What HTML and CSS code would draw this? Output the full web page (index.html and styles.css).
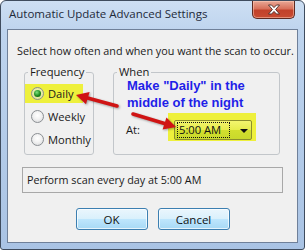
FILE: index.html
```html
<!DOCTYPE html>
<html>
<head>
<meta charset="utf-8">
<link rel="stylesheet" href="styles.css">
</head>
<body>
<div class="window">
  <div class="titlebar">
    <span class="title">Automatic Update Advanced Settings</span>
    <span class="close">
      <svg width="14" height="11" viewBox="0 0 14 11"><path d="M1.5 1 L4.5 1 L7 3.6 L9.5 1 L12.5 1 L8.6 5.5 L12.5 10 L9.5 10 L7 7.4 L4.5 10 L1.5 10 L5.4 5.5 Z" fill="#fff" stroke="#4a2a26" stroke-width="0.9" stroke-linejoin="round"/></svg>
    </span>
  </div>
  <div class="client">
    <div class="intro">Select how often and when you want the scan to occur.</div>
    <div class="groups">
      <fieldset class="group freq">
        <legend>Frequency</legend>
        <div class="radios">
          <div class="radio-row hl"><span class="radio checked"></span><span>Daily</span></div>
          <div class="radio-row"><span class="radio"></span><span>Weekly</span></div>
          <div class="radio-row"><span class="radio"></span><span>Monthly</span></div>
        </div>
      </fieldset>
      <fieldset class="group when">
        <legend>When</legend>
        <div class="note">Make "Daily" in the<br>middle of the night</div>
        <div class="at-row">
          <span class="at">At:</span>
          <div class="combo-hl">
            <div class="combo">
              <span class="combo-text">5:00 AM</span>
              <span class="combo-arrow"></span>
            </div>
          </div>
        </div>
      </fieldset>
    </div>
    <div class="status">Perform scan every day at 5:00 AM</div>
    <div class="buttons">
      <button class="btn">OK</button>
      <button class="btn">Cancel</button>
    </div>
  </div>
  <svg class="arrows" width="305" height="250" viewBox="0 0 305 250">
    <line x1="117" y1="106" x2="87.6" y2="98.1" stroke="#d01414" stroke-width="3.6" stroke-linecap="round"/>
    <polygon points="76,95 89.6,92 86,104.2" fill="#d01414"/>
    <line x1="133" y1="114" x2="164.5" y2="123.5" stroke="#d01414" stroke-width="3.6" stroke-linecap="round"/>
    <polygon points="176,127 162.6,129.6 166.4,117.4" fill="#d01414"/>
  </svg>
</div>
</body>
</html>
```
FILE: styles.css
```css
html, body {
  margin: 0;
  padding: 0;
  background: #ffffff;
}

.window {
  position: relative;
  width: 305px;
  height: 250px;
  box-sizing: border-box;
  border: 1px solid #3f4c5e;
  border-radius: 6px 6px 3px 3px;
  background: linear-gradient(#cddff3 0px, #bed4ee 30px, #a9c3e4 250px);
  display: flex;
  flex-direction: column;
  font-family: "Open Sans", "Noto Sans", sans-serif;
  font-size: 10.8px;
  color: #1a1a1a;
  overflow: hidden;
  white-space: nowrap;
}

.titlebar {
  height: 28px;
  display: flex;
  align-items: flex-start;
  flex: none;
}

.title {
  padding-left: 8px;
  margin-top: 5px;
  line-height: 16px;
  font-size: 11.5px;
  color: #1e2a3a;
}

.close {
  margin-left: auto;
  margin-right: 9px;
  width: 43px;
  height: 18px;
  box-sizing: border-box;
  border: 1px solid #5e2a22;
  border-top: none;
  border-radius: 0 0 5px 5px;
  background: linear-gradient(#e9a896 0%, #d8715b 45%, #c2412a 55%, #c84b32 100%);
  box-shadow: inset 0 0 0 1px rgba(255, 210, 190, 0.5);
  display: flex;
  align-items: center;
  justify-content: center;
}

.client {
  flex: 1;
  margin: 0 6px 6px 6px;
  border: 1px solid #6f8099;
  background: #f0f0f0;
  display: flex;
  flex-direction: column;
}

.intro {
  padding: 13px 0 0 9px;
  line-height: 16px;
  margin-bottom: 5px;
}

.groups {
  display: flex;
  align-items: stretch;
  margin-left: 16px;
}

.group {
  margin: 0;
  padding: 0;
  border: 1px solid #c2c6ca;
  border-radius: 3px;
  box-sizing: border-box;
  min-width: 0;
}

.group legend {
  margin-left: 3px;
  padding: 0 2px;
  line-height: 16px;
  font-size: 11.2px;
}

.freq {
  width: 70px;
  padding-bottom: 5px;
}

.when {
  width: 167px;
  margin-left: 19px;
}

.radios {
  margin-top: 4px;
  font-size: 11.2px;
}

.radio-row {
  height: 19px;
  margin-bottom: 4px;
  width: 58px;
  display: flex;
  align-items: center;
  padding-left: 6px;
  box-sizing: border-box;
}

.radio-row:last-child {
  margin-bottom: 0;
}

.hl {
  background: #eef03c;
}

.radio {
  width: 13px;
  height: 13px;
  box-sizing: border-box;
  border: 1px solid #8b8f93;
  border-radius: 50%;
  background: radial-gradient(circle at 50% 40%, #ffffff 0%, #f2f2f2 45%, #d2d4d6 100%);
  margin-right: 4px;
  flex: none;
  display: flex;
  align-items: center;
  justify-content: center;
}

.radio.checked {
  background: radial-gradient(circle at 50% 40%, #f3f6c0 0%, #d9df8a 100%);
}

.radio.checked::after {
  content: "";
  width: 7px;
  height: 7px;
  border-radius: 50%;
  background: radial-gradient(circle at 40% 35%, #7fe07f 0%, #1c8a1c 55%, #0d4f0d 100%);
}

.note {
  margin-top: -3px;
  padding-left: 13px;
  font-family: "Liberation Sans", Arial, sans-serif;
  font-weight: bold;
  font-size: 13px;
  line-height: 17px;
  color: #1f1fe8;
}

.at-row {
  display: flex;
  align-items: flex-end;
  margin-top: 2px;
  padding-left: 12px;
  font-size: 11.2px;
}

.at {
  width: 42px;
  line-height: 16px;
  margin-bottom: 3px;
}

.combo-hl {
  background: #eef03c;
  padding: 7px 4px 1px 6px;
}

.combo {
  width: 78px;
  height: 20px;
  box-sizing: border-box;
  border: 1px solid #8c8f2c;
  border-radius: 2px;
  background: linear-gradient(#f3f56e 0%, #e6ec4c 50%, #d2df2e 51%, #c9d92c 100%);
  display: flex;
  align-items: center;
  padding-left: 2px;
}

.combo-text {
  border: 1px dotted #111;
  padding: 0 2px 0 1px;
  line-height: 14px;
  width: 53px;
  box-sizing: border-box;
  color: #111;
}

.combo-arrow {
  margin-left: 10px;
  width: 0;
  height: 0;
  border-left: 4px solid transparent;
  border-right: 4px solid transparent;
  border-top: 4px solid #111;
  margin-top: 2px;
}

.status {
  margin: 12px 0 0 14px;
  width: 261px;
  height: 26px;
  box-sizing: border-box;
  border: 1px solid #a8a8a8;
  padding-left: 4px;
  line-height: 24px;
}

.buttons {
  display: flex;
  justify-content: center;
  gap: 10px;
  margin-top: 15px;
}

.btn {
  width: 72px;
  height: 22px;
  font-family: inherit;
  font-size: 11.5px;
  color: #111;
  border: 1px solid #3c7fb1;
  border-radius: 3px;
  background: linear-gradient(#eaf6fd 0%, #d9f0fc 50%, #bee6fd 51%, #a7d9f5 100%);
  box-shadow: inset 0 0 0 1px rgba(255, 255, 255, 0.7);
  padding: 0;
}

.arrows {
  position: absolute;
  top: -1px;
  left: -1px;
  pointer-events: none;
  filter: drop-shadow(1px 1px 1px rgba(0, 0, 0, 0.35));
}
```
